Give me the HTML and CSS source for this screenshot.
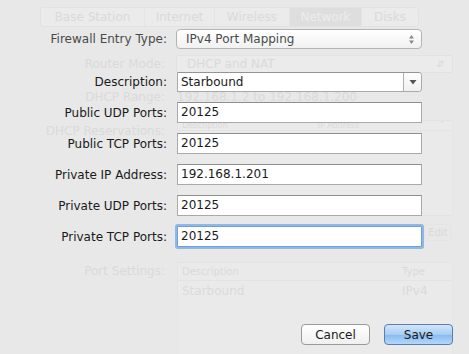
FILE: index.html
```html
<!DOCTYPE html>
<html lang="en">
<head>
  <meta charset="utf-8" />
  <title>AirPort Utility - Port Mapping</title>
  <link rel="stylesheet" href="styles.css">
</head>
<body>
  <div id="window">
    <!-- Faded window content behind the sheet -->
    <div class="backdrop">
      <div class="tabs">
        <span class="tab">Base Station</span>
        <span class="tab">Internet</span>
        <span class="tab">Wireless</span>
        <span class="tab selected">Network</span>
        <span class="tab">Disks</span>
      </div>
      <div class="bd-row router-row">
        <span class="bd-label">Router Mode:</span>
        <span class="bd-popup">DHCP and NAT<span class="bd-arrows">&#8693;</span></span>
      </div>
      <div class="bd-row range-row">
        <span class="bd-label">DHCP Range:</span>
        <span class="bd-text">192.168.1.2 to 192.168.1.200</span>
      </div>
      <div class="bd-row reserv-row">
        <span class="bd-label">DHCP Reservations:</span>
        <div class="bd-table reserv-table">
          <div class="bd-head small"><span>Description</span><span class="col-ip">IP Address</span><span class="col-sort">&#708;</span></div>
        </div>
      </div>
      <div class="bd-buttons">
        <span class="bd-button">Edit</span>
      </div>
      <div class="bd-row ports-row">
        <span class="bd-label">Port Settings:</span>
        <div class="bd-table ports-table">
          <div class="bd-head"><span>Description</span><span class="col-type">Type</span></div>
          <div class="bd-line"><span>Starbound</span><span class="col-type">IPv4</span></div>
        </div>
      </div>
    </div>

    <!-- The sheet -->
    <div class="sheet">
      <div class="form">
        <label class="label muted">Firewall Entry Type:</label>
        <div class="popup">IPv4 Port Mapping
          <svg class="updown" width="7" height="11" viewBox="0 0 7 11"><path d="M3.5 1 L6 4.5 H1 Z M3.5 10 L6 6.5 H1 Z" fill="#8a8a8a"/></svg>
        </div>

        <label class="label first-field">Description:</label>
        <div class="combo first-field">
          <span class="combo-text">Starbound</span>
          <span class="combo-btn"><svg width="8" height="6" viewBox="0 0 8 6"><path d="M0.5 1 H7.5 L4 5.5 Z" fill="#555"/></svg></span>
        </div>

        <label class="label">Public UDP Ports:</label>
        <div class="field">20125</div>

        <label class="label">Public TCP Ports:</label>
        <div class="field">20125</div>

        <label class="label">Private IP Address:</label>
        <div class="field">192.168.1.201</div>

        <label class="label">Private UDP Ports:</label>
        <div class="field">20125</div>

        <label class="label">Private TCP Ports:</label>
        <div class="field focused">20125</div>
      </div>

      <div class="actions">
        <button class="btn">Cancel</button>
        <button class="btn default">Save</button>
      </div>
    </div>
  </div>
</body>
</html>
```

FILE: styles.css
```css
* {
  margin: 0;
  padding: 0;
  box-sizing: border-box;
}

body {
  background-color: #e8e8e8;
  font-family: "DejaVu Sans", sans-serif;
  font-size: 12px;
  color: #1a1a1a;
  overflow: hidden;
}

#window {
  position: relative;
  width: 469px;
  height: 354px;
  overflow: hidden;
}

/* Backdrop (faded window) */
.backdrop {
  padding-top: 7px;
  color: #dadada;
}

.tabs {
  display: flex;
  margin-left: 40px;
  width: 379px;
  height: 20px;
  border: 1px solid #e2e2e2;
  border-radius: 3px;
  background-color: #ebebeb;
}

.tab {
  display: flex;
  align-items: center;
  justify-content: center;
  padding: 0 12px;
  border-right: 1px solid #e4e4e4;
  font-size: 12px;
}

.tab:nth-child(1) { width: 111px; }
.tab:nth-child(2) { width: 70px; }
.tab:nth-child(3) { width: 75px; }
.tab:nth-child(4) { width: 72px; }
.tab:last-child { flex: 1; border-right: none; }

.tab.selected {
  background-color: #dedede;
  color: #ececec;
}

.bd-row {
  display: flex;
  align-items: flex-start;
}

.bd-label {
  width: 167px;
  text-align: right;
  padding-right: 2px;
  flex-shrink: 0;
}

.router-row {
  margin-top: 28px;
  height: 18px;
  align-items: center;
}

.bd-popup {
  display: flex;
  align-items: center;
  justify-content: space-between;
  margin-left: 9px;
  width: 277px;
  height: 18px;
  padding: 0 8px 0 10px;
  border: 1px solid #e2e2e2;
  border-radius: 3px;
  background-color: #ebebeb;
}

.bd-arrows {
  font-size: 9px;
}

.range-row {
  margin-top: 17px;
}

.bd-text {
  margin-left: 10px;
}

.reserv-row {
  margin-top: 16px;
}

.reserv-row .bd-label {
  margin-top: 4px;
}

.bd-table {
  margin-left: 10px;
  width: 276px;
  border: 1px solid #e4e4e4;
  background-color: #eaeaea;
}

.reserv-table {
  height: 96px;
}

.bd-head,
.bd-line {
  display: flex;
  height: 18px;
  align-items: center;
  padding: 0 4px;
  font-size: 10px;
  border-bottom: 1px solid #e4e4e4;
}

.bd-head.small {
  height: 10px;
  font-size: 8px;
}

.bd-line {
  font-size: 12px;
  height: 20px;
  border-bottom: none;
}

.col-ip {
  margin-left: 90px;
}

.col-sort {
  margin-left: auto;
  margin-right: 4px;
}

.col-type {
  margin-left: auto;
  width: 46px;
}

.bd-buttons {
  display: flex;
  justify-content: flex-end;
  padding-right: 17px;
  margin-top: 8px;
}

.bd-button {
  width: 28px;
  height: 17px;
  border: 1px solid #e4e4e4;
  border-radius: 3px;
  font-size: 10px;
  text-align: center;
  line-height: 15px;
}

.ports-row {
  margin-top: 21px;
}

.ports-table {
  height: 100px;
}

.ports-row .bd-label {
  margin-top: 2px;
}

/* Sheet */
.sheet {
  position: absolute;
  top: 0;
  left: 0;
  right: 0;
  bottom: 0;
  padding-top: 29px;
  display: flex;
  flex-direction: column;
}

.form {
  display: grid;
  grid-template-columns: 167px 245px;
  column-gap: 10px;
  row-gap: 10px;
  align-items: center;
}

.label {
  text-align: right;
  white-space: nowrap;
}

.label.muted {
  color: #4a4a4a;
}

.first-field {
  margin-top: 13px;
}

.popup {
  display: flex;
  align-items: center;
  justify-content: space-between;
  margin-left: -1px;
  height: 20px;
  padding: 0 6px 0 9px;
  border: 1px solid #b4b4b4;
  border-radius: 4px;
  background: linear-gradient(#ffffff, #f1f1f1);
  color: #4a4a4a;
  font-size: 12px;
}

.combo {
  display: flex;
  height: 20px;
  border: 1px solid #a9a9a9;
  border-top-color: #949494;
  border-radius: 0 4px 4px 0;
  background-color: #fff;
}

.combo-text {
  flex: 1;
  padding-left: 3px;
  line-height: 18px;
}

.combo-btn {
  display: flex;
  align-items: center;
  justify-content: center;
  width: 18px;
  border-left: 1px solid #b0b0b0;
  background: linear-gradient(#ffffff, #f0f0f0);
  border-radius: 0 3px 3px 0;
}

.field {
  height: 21px;
  padding-left: 3px;
  line-height: 19px;
  border: 1px solid #a9a9a9;
  border-top-color: #8e8e8e;
  background-color: #fff;
}

.field.focused {
  border-color: #6f9fd8;
  box-shadow: 0 0 0 2px #90b8e6;
  border-radius: 1px;
}

.actions {
  display: flex;
  justify-content: flex-end;
  gap: 14px;
  padding-right: 16px;
  margin-top: auto;
  margin-bottom: 9px;
}

.btn {
  width: 69px;
  height: 21px;
  font-family: "DejaVu Sans", sans-serif;
  font-size: 12px;
  color: #1a1a1a;
  border: 1px solid #9a9a9a;
  border-radius: 4px;
  background: linear-gradient(#ffffff, #f0f0f0);
}

.btn.default {
  border-color: #5a7fae;
  background: linear-gradient(#d3e6fa, #a8cdf3 50%, #86b9ee 51%, #b4d8fb);
}
```
